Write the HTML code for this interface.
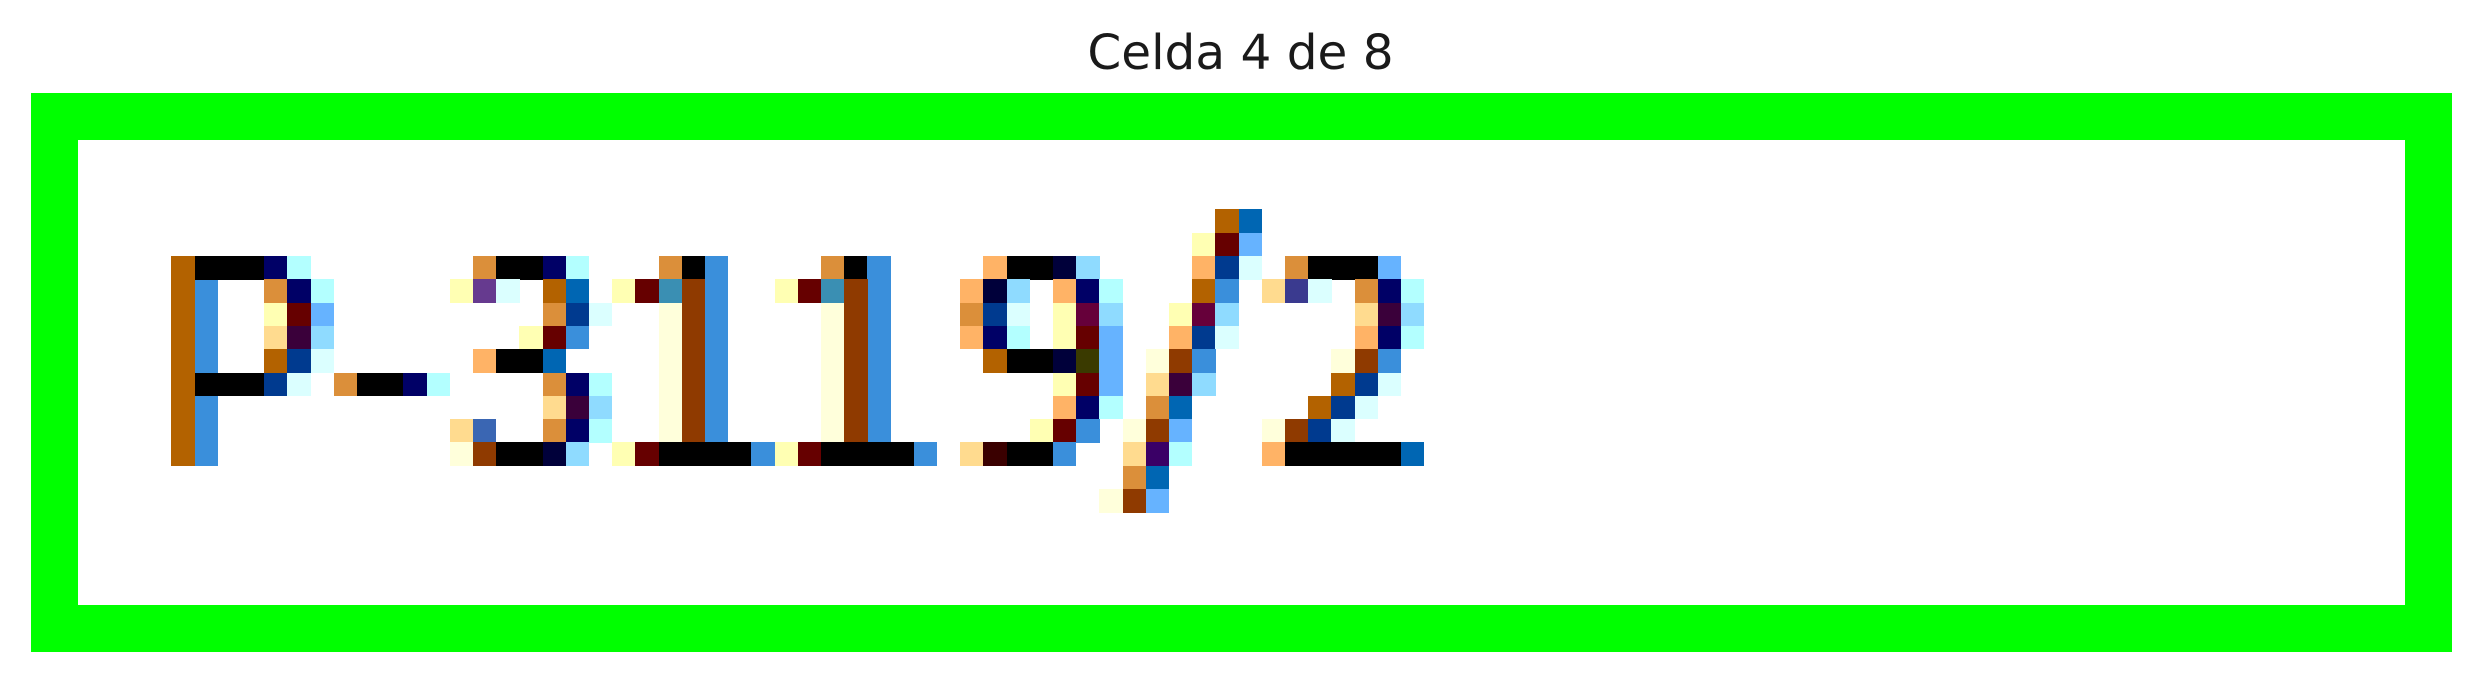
<!DOCTYPE html>
<html><head><meta charset="utf-8"><style>
html,body{margin:0;padding:0;background:#fff;width:2481px;height:684px;overflow:hidden;position:relative}
.t{position:absolute;left:0;width:2481px;top:25px;text-align:center;font-family:"DejaVu Sans","Liberation Sans",sans-serif;font-size:48.5px;line-height:56px;color:#1a1a1a}
.b{position:absolute;left:31px;top:93px;width:2327px;height:465px;border:47px solid #00ff00;background:#fff}
i{position:absolute;display:block;width:23.4px;height:23.5px;left:calc(171.4px + var(--c)*23.2px);top:calc(256px + var(--r)*23.3px)}
</style></head><body>
<div class="t">Celda 4 de 8</div>
<div class="b"></div>
<!-- P -->
<i style="--c:0;--r:0;height:210px;background:#b36200"></i>
<i style="--c:1;--r:1;height:187px;background:#3a8fdb"></i>
<i style="--c:1;--r:0;width:70px;background:#000"></i>
<i style="--c:4;--r:0;background:#000066"></i><i style="--c:5;--r:0;background:#b3ffff"></i>
<i style="--c:4;--r:1;background:#db8f3a"></i><i style="--c:5;--r:1;background:#000066"></i><i style="--c:6;--r:1;background:#b3ffff"></i>
<i style="--c:4;--r:2;background:#ffffb3"></i><i style="--c:5;--r:2;background:#660000"></i><i style="--c:6;--r:2;background:#66b3ff"></i>
<i style="--c:4;--r:3;background:#ffdb8f"></i><i style="--c:5;--r:3;background:#3a003a"></i><i style="--c:6;--r:3;background:#8fdbff"></i>
<i style="--c:4;--r:4;background:#b36200"></i><i style="--c:5;--r:4;background:#003a8f"></i><i style="--c:6;--r:4;background:#dbffff"></i>
<i style="--c:1;--r:5;width:70px;background:#000"></i><i style="--c:4;--r:5;background:#003a8f"></i><i style="--c:5;--r:5;background:#dbffff"></i>
<!-- dash -->
<i style="--c:7;--r:5;background:#db8f3a"></i><i style="--c:8;--r:5;width:47px;background:#000"></i><i style="--c:10;--r:5;background:#000066"></i><i style="--c:11;--r:5;background:#b3ffff"></i>
<!-- 3 -->
<i style="--c:13;--r:0;background:#db8f3a"></i><i style="--c:14;--r:0;width:47px;background:#000"></i><i style="--c:16;--r:0;background:#000066"></i><i style="--c:17;--r:0;background:#b3ffff"></i>
<i style="--c:12;--r:1;background:#ffffb3"></i><i style="--c:13;--r:1;background:#663a8f"></i><i style="--c:14;--r:1;background:#dbffff"></i><i style="--c:16;--r:1;background:#b36200"></i><i style="--c:17;--r:1;background:#0066b3"></i>
<i style="--c:16;--r:2;background:#db8f3a"></i><i style="--c:17;--r:2;background:#003a8f"></i><i style="--c:18;--r:2;background:#dbffff"></i>
<i style="--c:15;--r:3;background:#ffffb3"></i><i style="--c:16;--r:3;background:#660000"></i><i style="--c:17;--r:3;background:#3a8fdb"></i>
<i style="--c:13;--r:4;background:#ffb366"></i><i style="--c:14;--r:4;width:47px;background:#000"></i><i style="--c:16;--r:4;background:#0066b3"></i>
<i style="--c:16;--r:5;background:#db8f3a"></i><i style="--c:17;--r:5;background:#000066"></i><i style="--c:18;--r:5;background:#b3ffff"></i>
<i style="--c:16;--r:6;background:#ffdb8f"></i><i style="--c:17;--r:6;background:#3a003a"></i><i style="--c:18;--r:6;background:#8fdbff"></i>
<i style="--c:12;--r:7;background:#ffdb8f"></i><i style="--c:13;--r:7;background:#3a66b3"></i><i style="--c:16;--r:7;background:#db8f3a"></i><i style="--c:17;--r:7;background:#000066"></i><i style="--c:18;--r:7;background:#b3ffff"></i>
<i style="--c:12;--r:8;background:#ffffdb"></i><i style="--c:13;--r:8;background:#8f3a00"></i><i style="--c:14;--r:8;width:47px;background:#000"></i><i style="--c:16;--r:8;background:#00003a"></i><i style="--c:17;--r:8;background:#8fdbff"></i>
<!-- 1 -->
<i style="--c:21;--r:0;background:#db8f3a"></i><i style="--c:22;--r:0;background:#000"></i><i style="--c:23;--r:0;height:187px;background:#3a8fdb"></i>
<i style="--c:19;--r:1;background:#ffffb3"></i><i style="--c:20;--r:1;background:#660000"></i><i style="--c:21;--r:1;background:#3a8fb3"></i><i style="--c:22;--r:1;height:164px;background:#8f3a00"></i>
<i style="--c:21;--r:2;height:140px;background:#ffffdb"></i>
<i style="--c:19;--r:8;background:#ffffb3"></i><i style="--c:20;--r:8;background:#660000"></i><i style="--c:21;--r:8;width:93px;background:#000"></i><i style="--c:25;--r:8;background:#3a8fdb"></i>
<!-- 1 -->
<i style="--c:28;--r:0;background:#db8f3a"></i><i style="--c:29;--r:0;background:#000"></i><i style="--c:30;--r:0;height:187px;background:#3a8fdb"></i>
<i style="--c:26;--r:1;background:#ffffb3"></i><i style="--c:27;--r:1;background:#660000"></i><i style="--c:28;--r:1;background:#3a8fb3"></i><i style="--c:29;--r:1;height:164px;background:#8f3a00"></i>
<i style="--c:28;--r:2;height:140px;background:#ffffdb"></i>
<i style="--c:26;--r:8;background:#ffffb3"></i><i style="--c:27;--r:8;background:#660000"></i><i style="--c:28;--r:8;width:93px;background:#000"></i><i style="--c:32;--r:8;background:#3a8fdb"></i>
<!-- 9 -->
<i style="--c:35;--r:0;background:#ffb366"></i><i style="--c:36;--r:0;width:47px;background:#000"></i><i style="--c:38;--r:0;background:#00003a"></i><i style="--c:39;--r:0;background:#8fdbff"></i>
<i style="--c:34;--r:1;background:#ffb366"></i><i style="--c:35;--r:1;background:#00003a"></i><i style="--c:36;--r:1;background:#8fdbff"></i><i style="--c:38;--r:1;background:#ffb366"></i><i style="--c:39;--r:1;background:#000066"></i><i style="--c:40;--r:1;background:#b3ffff"></i>
<i style="--c:34;--r:2;background:#db8f3a"></i><i style="--c:35;--r:2;background:#003a8f"></i><i style="--c:36;--r:2;background:#dbffff"></i><i style="--c:38;--r:2;background:#ffffb3"></i><i style="--c:39;--r:2;background:#66003a"></i><i style="--c:40;--r:2;background:#8fdbff"></i>
<i style="--c:34;--r:3;background:#ffb366"></i><i style="--c:35;--r:3;background:#000066"></i><i style="--c:36;--r:3;background:#b3ffff"></i><i style="--c:38;--r:3;background:#ffffb3"></i><i style="--c:39;--r:3;background:#660000"></i><i style="--c:40;--r:3;background:#66b3ff"></i>
<i style="--c:35;--r:4;background:#b36200"></i><i style="--c:36;--r:4;width:47px;background:#000"></i><i style="--c:38;--r:4;background:#00003a"></i><i style="--c:39;--r:4;background:#3a3a00"></i><i style="--c:40;--r:4;background:#66b3ff"></i>
<i style="--c:38;--r:5;background:#ffffb3"></i><i style="--c:39;--r:5;background:#660000"></i><i style="--c:40;--r:5;background:#66b3ff"></i>
<i style="--c:38;--r:6;background:#ffb366"></i><i style="--c:39;--r:6;background:#000066"></i><i style="--c:40;--r:6;background:#b3ffff"></i>
<i style="--c:37;--r:7;background:#ffffb3"></i><i style="--c:38;--r:7;background:#660000"></i><i style="--c:39;--r:7;background:#3a8fdb"></i>
<i style="--c:34;--r:8;background:#ffdb8f"></i><i style="--c:35;--r:8;background:#3a0000"></i><i style="--c:36;--r:8;width:47px;background:#000"></i><i style="--c:38;--r:8;background:#3a8fdb"></i>
<!-- slash -->
<i style="--c:45;--r:-2;background:#b36200"></i><i style="--c:46;--r:-2;background:#0066b3"></i>
<i style="--c:44;--r:-1;background:#ffffb3"></i><i style="--c:45;--r:-1;background:#660000"></i><i style="--c:46;--r:-1;background:#66b3ff"></i>
<i style="--c:44;--r:0;background:#ffb366"></i><i style="--c:45;--r:0;background:#003a8f"></i><i style="--c:46;--r:0;background:#dbffff"></i>
<i style="--c:44;--r:1;background:#b36200"></i><i style="--c:45;--r:1;background:#3a8fdb"></i>
<i style="--c:43;--r:2;background:#ffffb3"></i><i style="--c:44;--r:2;background:#66003a"></i><i style="--c:45;--r:2;background:#8fdbff"></i>
<i style="--c:43;--r:3;background:#ffb366"></i><i style="--c:44;--r:3;background:#003a8f"></i><i style="--c:45;--r:3;background:#dbffff"></i>
<i style="--c:42;--r:4;background:#ffffdb"></i><i style="--c:43;--r:4;background:#8f3a00"></i><i style="--c:44;--r:4;background:#3a8fdb"></i>
<i style="--c:42;--r:5;background:#ffdb8f"></i><i style="--c:43;--r:5;background:#3a003a"></i><i style="--c:44;--r:5;background:#8fdbff"></i>
<i style="--c:42;--r:6;background:#db8f3a"></i><i style="--c:43;--r:6;background:#0066b3"></i>
<i style="--c:41;--r:7;background:#ffffdb"></i><i style="--c:42;--r:7;background:#8f3a00"></i><i style="--c:43;--r:7;background:#66b3ff"></i>
<i style="--c:41;--r:8;background:#ffdb8f"></i><i style="--c:42;--r:8;background:#3a0066"></i><i style="--c:43;--r:8;background:#b3ffff"></i>
<i style="--c:41;--r:9;background:#db8f3a"></i><i style="--c:42;--r:9;background:#0066b3"></i>
<i style="--c:40;--r:10;background:#ffffdb"></i><i style="--c:41;--r:10;background:#8f3a00"></i><i style="--c:42;--r:10;background:#66b3ff"></i>
<!-- 2 -->
<i style="--c:48;--r:0;background:#db8f3a"></i><i style="--c:49;--r:0;width:70px;background:#000"></i><i style="--c:52;--r:0;background:#66b3ff"></i>
<i style="--c:47;--r:1;background:#ffdb8f"></i><i style="--c:48;--r:1;background:#3a3a8f"></i><i style="--c:49;--r:1;background:#dbffff"></i><i style="--c:51;--r:1;background:#db8f3a"></i><i style="--c:52;--r:1;background:#000066"></i><i style="--c:53;--r:1;background:#b3ffff"></i>
<i style="--c:51;--r:2;background:#ffdb8f"></i><i style="--c:52;--r:2;background:#3a003a"></i><i style="--c:53;--r:2;background:#8fdbff"></i>
<i style="--c:51;--r:3;background:#ffb366"></i><i style="--c:52;--r:3;background:#000066"></i><i style="--c:53;--r:3;background:#b3ffff"></i>
<i style="--c:50;--r:4;background:#ffffdb"></i><i style="--c:51;--r:4;background:#8f3a00"></i><i style="--c:52;--r:4;background:#3a8fdb"></i>
<i style="--c:50;--r:5;background:#b36200"></i><i style="--c:51;--r:5;background:#003a8f"></i><i style="--c:52;--r:5;background:#dbffff"></i>
<i style="--c:49;--r:6;background:#b36200"></i><i style="--c:50;--r:6;background:#003a8f"></i><i style="--c:51;--r:6;background:#dbffff"></i>
<i style="--c:47;--r:7;background:#ffffdb"></i><i style="--c:48;--r:7;background:#8f3a00"></i><i style="--c:49;--r:7;background:#003a8f"></i><i style="--c:50;--r:7;background:#dbffff"></i>
<i style="--c:47;--r:8;background:#ffb366"></i><i style="--c:48;--r:8;width:116px;background:#000"></i><i style="--c:53;--r:8;background:#0066b3"></i>
</body></html>
